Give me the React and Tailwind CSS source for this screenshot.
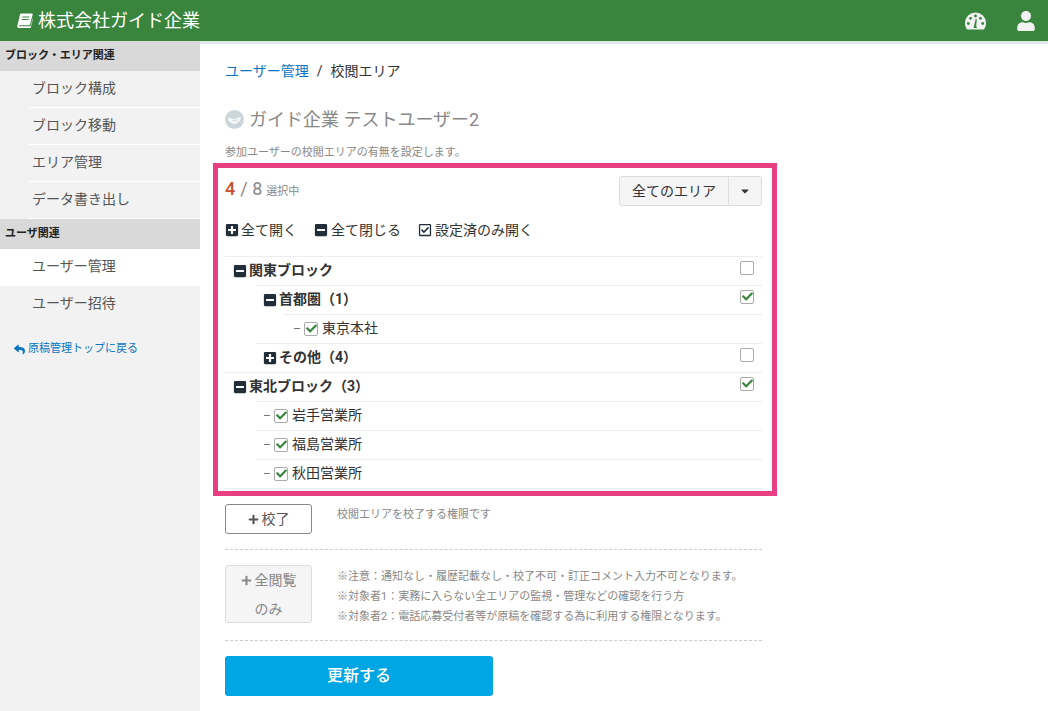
import React from 'react';
import { FaPlusSquare, FaMinusSquare, FaRegCheckSquare, FaUser, FaReply, FaPlus, FaCaretDown, FaCheck } from 'react-icons/fa';

const FONT = "font-['Roboto','Noto_Sans_CJK_JP',sans-serif]";

const BookIcon = () => (
    <svg width="16" height="15" viewBox="0 0 16 15" fill="currentColor">
        <path d="M4.2 0.5H15c.6 0 .9.5.7 1.1l-2.6 9.6c-.2.7-.8 1.1-1.5 1.1H2.6c-.7 0-.9.9-.1.9h10.3c.4 0 .8-.3.9-.6l2-7.2.3.4-2.4 8.9c-.2.7-.7 1-1.3 1H2.2C1 15.500 0 14 .4 12.600L3 1.500C3.200.9 3.600.5 4.200.5zM5.500 3.500l-.3 1h7l.3-1h-7zM4.800 6l-.3 1h7l.3-1h-7z" />
    </svg>
);

// dome with dots and a needle
const DashboardIcon = () => (
    <svg width="21" height="18" viewBox="0 0 21 18">
        <path d="M10.500.5A10.500 10.500 0 0 1 21 11c0 2.400-.6 4.400-1.800 6.100-.2.3-.5.4-.8.4H2.600c-.3 0-.6-.1-.8-.4C.6 15.400 0 13.400 0 11A10.500 10.500 0 0 1 10.500.5z" fill="#f2f2f2" />
        <g fill="#3a853d">
            <circle cx="3.300" cy="11.500" r="1.400" />
            <circle cx="5.500" cy="6.300" r="1.400" />
            <circle cx="10.500" cy="4" r="1.400" />
            <circle cx="15.500" cy="6.300" r="1.400" />
            <circle cx="17.700" cy="11.500" r="1.400" />
            <path d="M9 14.500l1.600-7.500 1.200.2-.6 7.300c.5.4.8 1 .6 1.600H8.800c-.2-.6-.1-1.200.2-1.600z" />
        </g>
    </svg>
);

const AvatarIcon = () => (
    <svg width="19" height="19" viewBox="0 0 19 19">
        <circle cx="9.500" cy="9.500" r="9.500" fill="#ccd5d9" />
        <path d="M3 7.500l6 1.500 7-2-1 4-5 3.500-3.500-1.500L3.500 11z" fill="#f4f7f8" />
        <path d="M7 10l3 1 3-1.500" fill="none" stroke="#ccd5d9" strokeWidth="0.800" />
    </svg>
);

const sideGroups = [
    { title: 'ブロック・エリア関連', items: ['ブロック構成', 'ブロック移動', 'エリア管理', 'データ書き出し'] },
    { title: 'ユーザ関連', items: ['ユーザー管理', 'ユーザー招待'] },
];

const Sidebar = () => (
    <aside className="w-[200px] shrink-0 bg-[#f2f2f2]">
        {sideGroups.map((group) => (
            <div key={group.title}>
                <div className="h-[30px] bg-[#d9d9d9] pl-[5px] flex items-center text-[11px] font-bold text-[#222]">{group.title}</div>
                {group.items.map((item) => (
                    <div key={item} className={`h-[37px] pl-[28px] ${item === 'ユーザー管理' ? 'bg-white' : ''}`}>
                        <div className={`h-full pl-[4px] pb-[1px] flex items-center border-b text-[14px] text-[#555] ${item === 'ユーザー招待' ? 'border-transparent' : 'border-white'}`}>
                            {item}
                        </div>
                    </div>
                ))}
            </div>
        ))}
        <div className="mt-[18px] pl-[14px] flex items-center gap-[3px] text-[11px] text-[#0a74c4]">
            <FaReply size={11} />
            原稿管理トップに戻る
        </div>
    </aside>
);

const Checkbox = ({ checked }) => (
    <span className="w-[14px] h-[14px] shrink-0 rounded-[2px] border border-[#aaa] bg-white flex items-center justify-center text-[#3a853d]">
        {checked && <FaCheck size={11} />}
    </span>
);

const rows = [
    { label: '関東ブロック', level: 0, type: 'minus', line: 'ml-0' },
    { label: '首都圏（1）', level: 1, type: 'minus', checked: true, line: 'ml-[31px]' },
    { label: '東京本社', level: 2, type: 'leaf', checked: true, line: 'ml-[59px]' },
    { label: 'その他（4）', level: 1, type: 'plus', line: 'ml-[31px]' },
    { label: '東北ブロック（3）', level: 0, type: 'minus', checked: true, line: 'ml-0' },
    { label: '岩手営業所', level: 1, type: 'leaf', checked: true, line: 'ml-[31px]' },
    { label: '福島営業所', level: 1, type: 'leaf', checked: true, line: 'ml-[31px]' },
    { label: '秋田営業所', level: 1, type: 'leaf', checked: true, line: 'ml-[31px]' },
];

const indents = ['pl-[8px]', 'pl-[38px]', 'pl-[68px]'];

const TreeRow = ({ row }) => (
    <div className="relative h-[29px]">
        <div className={`absolute top-0 left-0 right-0 border-t border-[#eee] ${row.line}`} />
        <div className={`h-full pr-[8px] flex items-center ${indents[row.level]}`}>
            {row.type === 'leaf' ? (
                <>
                    <span className="w-[6px] h-px bg-[#777] mr-[4px] ml-[1px]" />
                    <span className="mr-[4px]"><Checkbox checked /></span>
                    <span className="text-[14px] text-[#333]">{row.label}</span>
                </>
            ) : (
                <>
                    {row.type === 'minus' ? <FaMinusSquare size={14} className="text-[#222d3a] mr-[2px]" /> : <FaPlusSquare size={14} className="text-[#222d3a] mr-[2px]" />}
                    <span className="text-[14px] font-bold text-[#333]">{row.label}</span>
                    <span className="ml-auto mb-[6px]"><Checkbox checked={row.checked} /></span>
                </>
            )}
        </div>
    </div>
);

const App = () => {
    return (
        <div className={`${FONT} w-[1048px] h-[711px] overflow-hidden bg-white flex flex-col`}>
            <header className="h-[41px] shrink-0 bg-[#3a853d] flex items-center justify-between pl-[17px] pr-[12px] text-white">
                <div className="flex items-center gap-[5px] text-[18px]">
                    <BookIcon />
                    株式会社ガイド企業
                </div>
                <div className="flex items-center gap-[30px]">
                    <DashboardIcon />
                    <FaUser size={20} className="text-[#f2f2f2]" />
                </div>
            </header>
            <div className="flex flex-1 min-h-0">
                <Sidebar />
                <main className="flex-1 border-t-[3px] border-[#dceae6] pl-[13px]">
                    <div className="w-[564px]">
                        <div className="pl-[12px] mt-[16px] h-[22px] flex items-center text-[14px] text-[#333]">
                            <span className="text-[#0a74c4]">ユーザー管理</span>
                            <span className="mx-[8px]">/</span>
                            校閲エリア
                        </div>
                        <div className="pl-[12px] mt-[24px] h-[26px] flex items-center gap-[5px] text-[18px] text-[#888]">
                            <AvatarIcon />
                            ガイド企業 テストユーザー2
                        </div>
                        <p className="pl-[12px] mt-[14px] h-[14px] leading-[14px] text-[11px] text-[#888]">参加ユーザーの校閲エリアの有無を設定します。</p>
                        <section className="mt-[3px] h-[333px] border-[5px] border-[#e83e82] pl-[7px] pr-[10px]">
                            <div className="pt-[8px] flex items-start justify-between">
                                <div className="flex items-baseline h-[26px] leading-[26px] text-[#888]">
                                    <span className="text-[18px] font-medium text-[#c8502f]">4</span>
                                    <span className="text-[18px] ml-[5px]">/ 8</span>
                                    <span className="text-[11px] ml-[4px]">選択中</span>
                                </div>
                                <div className="flex h-[30px] rounded-[3px] border border-[#ddd] bg-[#f5f5f5] text-[14px] text-[#333]">
                                    <span className="w-[109px] flex items-center justify-center border-r border-[#ddd]">全てのエリア</span>
                                    <span className="w-[32px] flex items-center justify-center"><FaCaretDown size={12} /></span>
                                </div>
                            </div>
                            <div className="mt-[14px] h-[20px] flex items-center text-[14px] text-[#333]">
                                <span className="flex items-center gap-[2px]"><FaPlusSquare size={14} className="text-[#222d3a]" />全て開く</span>
                                <span className="ml-[17px] flex items-center gap-[3px]"><FaMinusSquare size={14} className="text-[#222d3a]" />全て閉じる</span>
                                <span className="ml-[17px] flex items-center gap-[3px]"><FaRegCheckSquare size={14} className="text-[#222d3a]" />設定済のみ開く</span>
                            </div>
                            <div className="mt-[16px] border-b border-[#eee]">
                                {rows.map((row) => <TreeRow key={row.label} row={row} />)}
                            </div>
                        </section>
                        <div className="ml-[12px] w-[537px]">
                            <div className="mt-[8px] pb-[15px] flex items-start border-b border-dashed border-[#ccc]">
                                <button className="w-[87px] h-[30px] rounded-[3px] border border-[#888] flex items-center justify-center gap-[3px] text-[14px] text-[#555]">
                                    <FaPlus size={11} />校了
                                </button>
                                <p className="ml-[25px] mt-[3px] text-[11px] text-[#888]">校閲エリアを校了する権限です</p>
                            </div>
                            <div className="mt-[15px] pb-[13px] flex items-start border-b border-dashed border-[#ccc]">
                                <button className="w-[87px] h-[58px] rounded-[3px] border border-[#ddd] bg-[#f5f5f5] text-[14px] leading-[28px] text-[#888]">
                                    <span className="inline-flex items-center gap-[3px]"><FaPlus size={11} />全閲覧</span><br />のみ
                                </button>
                                <div className="ml-[25px] mt-[2px] text-[11px] leading-[20px] text-[#888]">
                                    <p>※注意：通知なし・履歴記載なし・校了不可・訂正コメント入力不可となります。</p>
                                    <p>※対象者1：実務に入らない全エリアの監視・管理などの確認を行う方</p>
                                    <p>※対象者2：電話応募受付者等が原稿を確認する為に利用する権限となります。</p>
                                </div>
                            </div>
                            <button className="mt-[15px] w-[268px] h-[40px] rounded-[3px] bg-[#00a5e3] text-white text-[16px] font-medium">更新する</button>
                        </div>
                    </div>
                </main>
            </div>
        </div>
    );
};

export default App;
